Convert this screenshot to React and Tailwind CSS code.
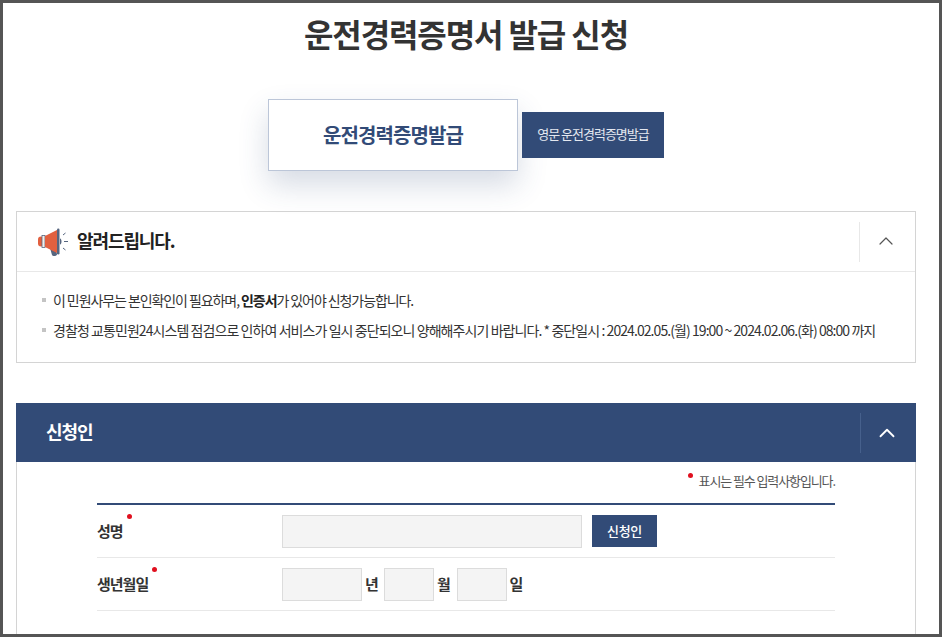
import { ChevronUp } from 'lucide-react'

const font = { fontFamily: '"Noto Sans CJK KR", "Noto Sans", sans-serif' }

function Megaphone() {
  return (
    <svg width="34" height="30" viewBox="0 0 34 30" className="shrink-0">
      <path d="M13 21l5 0 2 6c.5 2-4 3-5 1z" fill="#56657f" />
      <rect x="1" y="9.5" width="6" height="10" rx="3" fill="#e2603f" />
      <rect x="5" y="8.5" width="3" height="12" fill="#f3efe9" stroke="#56657f" strokeWidth="0.8" />
      <path d="M8 9l12-6v23l-12-6z" fill="#e2603f" />
      <rect x="20" y="1.5" width="2.5" height="26" rx="1.2" fill="#56657f" />
      <path d="M23 11.5c2 0 2 6 0 6z" fill="#56657f" />
      <path d="M26 8l2.5-2M27 14.5h4M26 21l2.5 2" stroke="#56657f" strokeWidth="1" fill="none" />
    </svg>
  )
}

function Dot({ className }) {
  return <span className={`absolute w-[5px] h-[5px] rounded-full bg-[#e0101f] ${className}`} />
}

function Input({ className }) {
  return <div className={`h-[33px] bg-[#f4f4f4] border border-[#dcdcdc] ${className}`} />
}

export default function App() {
  return (
    <div style={font} className="h-[637px] border-[3px] border-[#555555] bg-white overflow-hidden pl-[13px] pr-[23px] text-[#333]">
      <h1 className="text-[32px] leading-[46px] font-bold text-center text-[#333] tracking-[-1.1px] pt-[7px]">
        운전경력증명서 발급 신청
      </h1>

      {/* 탭 */}
      <div className="flex justify-center items-center gap-1 mt-[43px]">
        <div className="w-[250px] h-[72px] bg-white border border-[#bcc6d8] flex items-center justify-center text-[20px] font-bold text-[#324b77] tracking-[-0.9px] shadow-[0_14px_30px_rgba(50,75,119,0.2)]">
          운전경력증명발급
        </div>
        <div className="w-[142px] h-[46px] bg-[#324b77] flex items-center justify-center pb-[2px] text-[13px] text-[#e4e8f0] tracking-[-1px]">
          영문 운전경력증명발급
        </div>
      </div>

      {/* 알려드립니다 */}
      <section className="mt-10 h-[152px] border border-[#d4d4d4]">
        <div className="h-[60px] flex items-center border-b border-[#e8e8e8] pl-5">
          <Megaphone />
          <h2 className="ml-[6px] pb-[2px] text-[18px] font-bold text-[#222] tracking-[-1.1px]">알려드립니다.</h2>
          <div className="ml-auto w-[56px] h-[40px] border-l border-[#e8e8e8] flex items-center justify-center pr-[4px] pb-[2px]">
            <ChevronUp size={24} strokeWidth={1.2} className="text-[#555]" />
          </div>
        </div>
        <ul className="pt-[13px] pl-[25px] text-[14px] text-[#333]">
          <li className="h-[30px] flex items-center tracking-[-1.08px]">
            <span className="w-1 h-1 bg-[#c4c4c4] mr-[7px]" />
            <span>이 민원사무는 본인확인이 필요하며, <b className="text-[#222]">인증서</b>가 있어야 신청가능합니다.</span>
          </li>
          <li className="h-[30px] flex items-center tracking-[-0.93px]">
            <span className="w-1 h-1 bg-[#c4c4c4] mr-[7px]" />
            <span>경찰청 교통민원24시스템 점검으로 인하여 서비스가 일시 중단되오니 양해해주시기 바랍니다. * 중단일시 : 2024.02.05.(월) 19:00 ~ 2024.02.06.(화) 08:00 까지</span>
          </li>
        </ul>
      </section>

      {/* 신청인 */}
      <section className="mt-10">
        <div className="h-[59px] bg-[#324b77] flex items-center pl-[30px]">
          <h2 className="text-[18px] pb-[2px] font-bold text-white tracking-[-1px]">신청인</h2>
          <div className="ml-auto w-[56px] h-[40px] border-l border-[#46608c] flex items-center justify-center pr-[4px]">
            <ChevronUp size={26} strokeWidth={1.7} className="text-white" />
          </div>
        </div>
        <div className="h-[200px] border-x border-[#d4d4d4] px-20">
          <p className="relative h-[41px] pt-[10px] text-right text-[13px] leading-[18px] tracking-[-1.1px] text-[#555]">
            <Dot className="right-[142px] top-[11px]" />
            표시는 필수 입력사항입니다.
          </p>
          <div className="border-t-2 border-[#324b77]">
            <div className="h-[53px] flex items-center border-b border-[#e8e8e8]">
              <div className="relative w-[185px] text-[15px] font-bold text-[#333] tracking-[-1px]">
                성명
                <Dot className="left-[30px] top-[-6px]" />
              </div>
              <Input className="w-[300px]" />
              <button className="ml-[10px] w-[65px] h-[32px] bg-[#324b77] text-white text-[13px] font-medium tracking-[-0.3px]">신청인</button>
            </div>
            <div className="h-[53px] flex items-center border-b border-[#e8e8e8]">
              <div className="relative w-[185px] text-[15px] font-bold text-[#333] tracking-[-1px]">
                생년월일
                <Dot className="left-[55px] top-[-6px]" />
              </div>
              <Input className="w-[80px]" />
              <span className="w-[20px] text-center text-[15px] font-bold">년</span>
              <Input className="w-[50px] ml-[2px]" />
              <span className="w-[23px] pr-[3px] text-center text-[15px] font-bold">월</span>
              <Input className="w-[50px]" />
              <span className="w-[19px] text-center text-[15px] font-bold">일</span>
            </div>
          </div>
        </div>
      </section>
    </div>
  )
}
